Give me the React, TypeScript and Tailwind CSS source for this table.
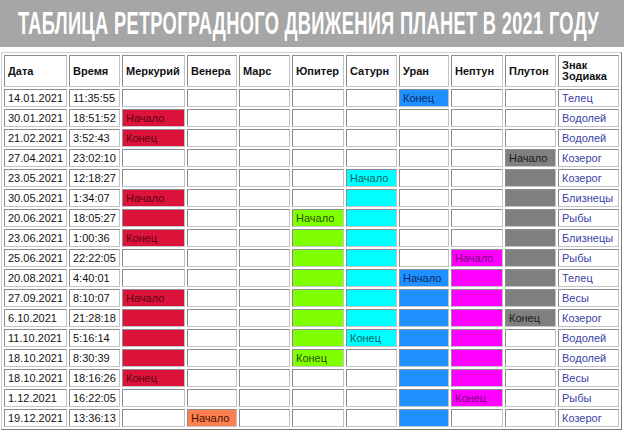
import React from 'react';

// columns: Меркурий, Венера, Марс, Юпитер, Сатурн, Уран, Нептун, Плутон
const PLANETS = ['Меркурий', 'Венера', 'Марс', 'Юпитер', 'Сатурн', 'Уран', 'Нептун', 'Плутон'];

const COLORS: Record<string, string> = {
  Меркурий: 'bg-[#dc143c] text-[#5c0010]',
  Венера: 'bg-[#ff7f50] text-[#4a1400]',
  Марс: 'bg-[#ff4500] text-[#4a1400]',
  Юпитер: 'bg-[#7fff00] text-[#2a5200]',
  Сатурн: 'bg-[#00ffff] text-[#0a6666]',
  Уран: 'bg-[#1e90ff] text-[#0c2a66]',
  Нептун: 'bg-[#ff00ff] text-[#7a007a]',
  Плутон: 'bg-[#808080] text-[#1a1a1a]',
};

type Row = {
  date: string;
  time: string;
  cells: Record<string, string>; // планета -> '' (закрашено) | 'Начало' | 'Конец'
  sign: string;
};

const rows: Row[] = [
  { date: '14.01.2021', time: '11:35:55', cells: { Уран: 'Конец' }, sign: 'Телец' },
  { date: '30.01.2021', time: '18:51:52', cells: { Меркурий: 'Начало' }, sign: 'Водолей' },
  { date: '21.02.2021', time: '3:52:43', cells: { Меркурий: 'Конец' }, sign: 'Водолей' },
  { date: '27.04.2021', time: '23:02:10', cells: { Плутон: 'Начало' }, sign: 'Козерог' },
  { date: '23.05.2021', time: '12:18:27', cells: { Сатурн: 'Начало', Плутон: '' }, sign: 'Козерог' },
  { date: '30.05.2021', time: '1:34:07', cells: { Меркурий: 'Начало', Сатурн: '', Плутон: '' }, sign: 'Близнецы' },
  { date: '20.06.2021', time: '18:05:27', cells: { Меркурий: '', Юпитер: 'Начало', Сатурн: '', Плутон: '' }, sign: 'Рыбы' },
  { date: '23.06.2021', time: '1:00:36', cells: { Меркурий: 'Конец', Юпитер: '', Сатурн: '', Плутон: '' }, sign: 'Близнецы' },
  { date: '25.06.2021', time: '22:22:05', cells: { Юпитер: '', Сатурн: '', Нептун: 'Начало', Плутон: '' }, sign: 'Рыбы' },
  { date: '20.08.2021', time: '4:40:01', cells: { Юпитер: '', Сатурн: '', Уран: 'Начало', Нептун: '', Плутон: '' }, sign: 'Телец' },
  { date: '27.09.2021', time: '8:10:07', cells: { Меркурий: 'Начало', Юпитер: '', Сатурн: '', Уран: '', Нептун: '', Плутон: '' }, sign: 'Весы' },
  { date: '6.10.2021', time: '21:28:18', cells: { Меркурий: '', Юпитер: '', Сатурн: '', Уран: '', Нептун: '', Плутон: 'Конец' }, sign: 'Козерог' },
  { date: '11.10.2021', time: '5:16:14', cells: { Меркурий: '', Юпитер: '', Сатурн: 'Конец', Уран: '', Нептун: '' }, sign: 'Водолей' },
  { date: '18.10.2021', time: '8:30:39', cells: { Меркурий: '', Юпитер: 'Конец', Уран: '', Нептун: '' }, sign: 'Водолей' },
  { date: '18.10.2021', time: '18:16:26', cells: { Меркурий: 'Конец', Уран: '', Нептун: '' }, sign: 'Весы' },
  { date: '1.12.2021', time: '16:22:05', cells: { Уран: '', Нептун: 'Конец' }, sign: 'Рыбы' },
  { date: '19.12.2021', time: '13:36:13', cells: { Венера: 'Начало', Уран: '' }, sign: 'Козерог' },
];

const cell =
  'border border-t-[#8c8c8c] border-l-[#8c8c8c] border-r-[#c4c4c4] border-b-[#c4c4c4] px-[3px] h-[18px] p-0 leading-none text-left align-middle';

export default function App() {
  return (
    <div className="w-[624px] h-[433px] bg-white overflow-hidden font-['Liberation_Sans',Arial,sans-serif] text-[11px] text-[#111]">
      {/* Заголовок */}
      <div className="h-[47px] bg-[#a6a6a6] flex items-center overflow-hidden">
        <span className="ml-[18px] whitespace-nowrap inline-block origin-left scale-x-[0.59] text-white font-bold text-[31px] tracking-[0.5px] leading-none">
          ТАБЛИЦА РЕТРОГРАДНОГО ДВИЖЕНИЯ ПЛАНЕТ В 2021 ГОДУ
        </span>
      </div>

      <div className="pt-[5px] pl-[1px]">
        <table className="border-separate border-spacing-[2px] border border-t-[#cfcfcf] border-l-[#cfcfcf] border-r-[#7a7a7a] border-b-[#7a7a7a] w-[621px] table-fixed">
          <colgroup>
            <col className="w-[63px]" />
            <col className="w-[51px]" />
            <col className="w-[63px]" />
            <col className="w-[50px]" />
            <col className="w-[51px]" />
            <col className="w-[52px]" />
            <col className="w-[51px]" />
            <col className="w-[50px]" />
            <col className="w-[52px]" />
            <col className="w-[51px]" />
            <col className="w-[61px]" />
          </colgroup>
          <thead>
            <tr>
              <th className={`${cell} h-[32px] font-bold`}>Дата</th>
              <th className={`${cell} h-[32px] font-bold`}>Время</th>
              {PLANETS.map(p => (
                <th key={p} className={`${cell} h-[32px] font-bold`}>
                  {p}
                </th>
              ))}
              <th className={`${cell} h-[32px] font-bold leading-[13px]`}>
                Знак
                <br />
                Зодиака
              </th>
            </tr>
          </thead>
          <tbody>
            {rows.map((row, i) => (
              <tr key={i}>
                <td className={cell}>{row.date}</td>
                <td className={cell}>{row.time}</td>
                {PLANETS.map(p => {
                  const v = row.cells[p];
                  const filled = v !== undefined;
                  return (
                    <td key={p} className={`${cell} ${filled ? COLORS[p] : ''}`}>
                      {v}
                    </td>
                  );
                })}
                <td className={`${cell} text-[#3b3fa6]`}>{row.sign}</td>
              </tr>
            ))}
          </tbody>
        </table>
      </div>
    </div>
  );
}
